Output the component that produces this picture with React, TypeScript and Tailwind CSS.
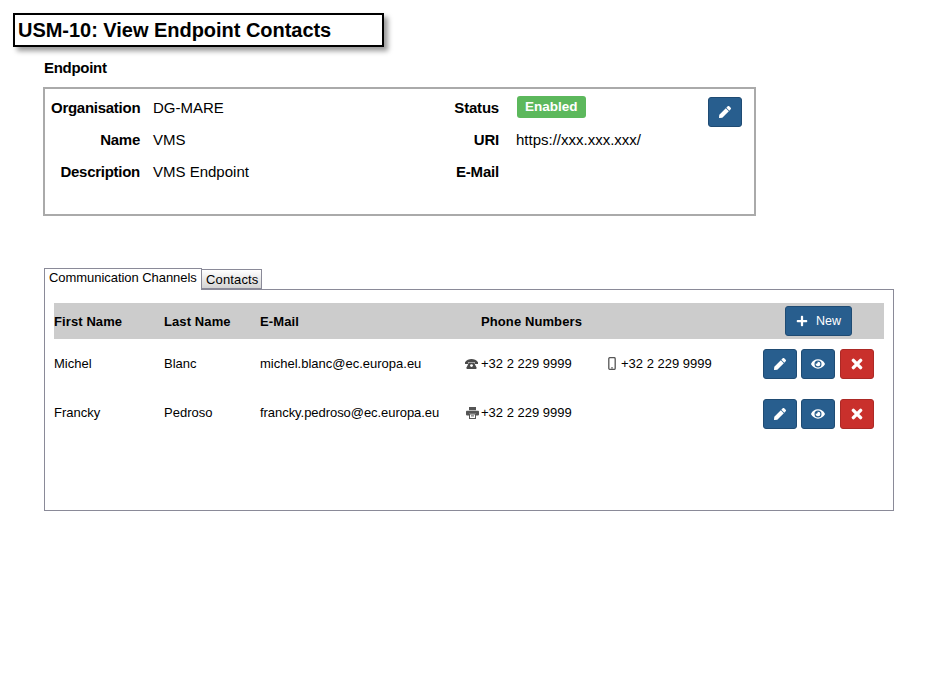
import { FaEye, FaPen, FaPlus } from "react-icons/fa";

function DeskPhone() {
  return (
    <svg width="13" height="10" viewBox="0 0 13 10" fill="#4a4a4a">
      <path d="M0 3.2C1.5.8 4 0 6.5 0S11.5.8 13 3.2V5H9.6V3H3.4v2H0z" />
      <path d="M4 3.6h5l2.4 4.6V10H1.6V8.2z" />
      <circle cx="6.5" cy="6.6" r="1.4" fill="#fff" />
    </svg>
  );
}

function Mobile() {
  return (
    <svg width="8" height="13" viewBox="0 0 8 13" fill="none">
      <rect x="0.8" y="0.6" width="6.4" height="11.8" rx="1.2" stroke="#555" strokeWidth="1.3" />
      <rect x="3" y="10.4" width="2" height="1" fill="#555" />
    </svg>
  );
}

function Printer() {
  return (
    <svg width="13" height="12" viewBox="0 0 13 12" fill="#555">
      <rect x="3" y="0" width="7" height="3.2" />
      <rect x="0" y="3.8" width="13" height="4.6" rx="0.8" />
      <rect x="3" y="6.6" width="7" height="5.4" fill="#fff" />
      <path d="M3 6.6h7V12H3zM4 7.6v3.4h5V7.6z" />
      <rect x="5" y="8.4" width="3" height="1" />
    </svg>
  );
}

// thick rounded cross, heavier than the icon pack's one
function Cross() {
  return (
    <svg width="12" height="12" viewBox="0 0 12 12" fill="none" stroke="currentColor" strokeWidth="3.4" strokeLinecap="round">
      <path d="M2.4 2.4l7.2 7.2M9.6 2.4l-7.2 7.2" />
    </svg>
  );
}

function IconButton({ color, children }: { color: "blue" | "red"; children: React.ReactNode }) {
  const cls =
    color === "blue"
      ? "bg-[#285e8e] border-[#1f4b73]"
      : "bg-[#c9302c] border-[#ac2925]";
  return (
    <button className={`flex h-[30px] w-[34px] items-center justify-center rounded-[3px] border text-white ${cls}`}>
      {children}
    </button>
  );
}

function Actions() {
  return (
    <div className="flex">
      <IconButton color="blue">
        <FaPen className="h-[12px] w-[12px]" />
      </IconButton>
      <div className="ml-[4px]">
        <IconButton color="blue">
          <FaEye className="h-[14px] w-[14px]" />
        </IconButton>
      </div>
      <div className="ml-[5px]">
        <IconButton color="red">
          <Cross />
        </IconButton>
      </div>
    </div>
  );
}

function Field({ label, children }: { label: string; children?: React.ReactNode }) {
  return (
    <div className="flex h-[32px] items-center">
      <div className="w-[89px] whitespace-nowrap text-right text-[15px] font-bold tracking-[-0.27px] text-black">{label}</div>
      <div className="ml-[13px] pt-px text-[15px] text-black">{children}</div>
    </div>
  );
}

function RightField({ label, children }: { label: string; children?: React.ReactNode }) {
  return (
    <div className="flex h-[32px] items-center">
      <div className="w-[55px] whitespace-nowrap text-right text-[15px] font-bold tracking-[-0.2px] text-black">{label}</div>
      <div className="ml-[17px] pt-px text-[15px] text-black">{children}</div>
    </div>
  );
}

export default function App() {
  return (
    <div className="min-h-screen bg-white font-['Liberation_Sans',Arial,sans-serif] text-black">
      <div className="pl-[13px] pt-[13px]">
        <div className="flex h-[34px] w-[371px] items-center border-2 border-black bg-white pl-[3px] text-[20px] font-bold tracking-[-0.03px] shadow-[4px_4px_5px_rgba(0,0,0,0.4)]">
          USM-10: View Endpoint Contacts
        </div>
      </div>

      <div className="pl-[44px] pt-[12px] text-[15px] font-bold leading-[17px] tracking-[-0.3px]">Endpoint</div>

      <div className="ml-[43px] mt-[11px] flex h-[129px] w-[713px] border-2 border-[#aaaaaa] pl-[6px] pt-[3px]">
        <div className="w-[393px]">
          <Field label="Organisation">DG-MARE</Field>
          <Field label="Name">VMS</Field>
          <Field label="Description">VMS Endpoint</Field>
        </div>
        <div className="w-[264px]">
          <RightField label="Status">
            <span className="-mt-[3px] ml-px block rounded-[3px] bg-[#5cb85c] px-[8px] py-[3px] text-[13.5px] font-bold leading-[16px] text-white">
              Enabled
            </span>
          </RightField>
          <RightField label="URI">https://xxx.xxx.xxx/</RightField>
          <RightField label="E-Mail" />
        </div>
        <div className="pt-[5px]">
          <IconButton color="blue">
            <FaPen className="h-[12px] w-[12px]" />
          </IconButton>
        </div>
      </div>

      <div className="ml-[44px] mt-[52px] flex h-[21px] items-end">
        <div className="relative z-10 -mb-px flex h-[22px] w-[158px] items-center border border-b-0 border-[#8a8a98] bg-white pb-[4px] pl-[4px] text-[13px] tracking-[-0.05px]">
          Communication Channels
        </div>
        <div className="flex h-[20px] w-[60px] items-center border border-[#8a8a98] border-l-0 bg-gradient-to-b from-white to-[#d4d4d4] pl-[4px] pt-px text-[13px] tracking-[0.15px]">
          Contacts
        </div>
      </div>

      <div className="ml-[44px] h-[222px] w-[850px] border border-[#8a8a98] px-[9px] pt-[13px] text-[13px] text-black">
        <div className="flex h-[36px] items-center bg-[#cccccc] font-bold tracking-[0.1px]">
          <div className="w-[110px] pt-px">First Name</div>
          <div className="w-[96px] pt-px">Last Name</div>
          <div className="w-[221px] pt-px">E-Mail</div>
          <div className="w-[304px] pt-px">Phone Numbers</div>
          <button className="flex h-[30px] w-[67px] items-center justify-center gap-[8px] rounded-[3px] border border-[#1f4b73] bg-[#285e8e] text-[12.5px] font-normal tracking-normal text-white">
            <FaPlus className="h-[12px] w-[12px]" />
            New
          </button>
        </div>

        <div className="flex h-[49px] items-center">
          <div className="w-[110px]">Michel</div>
          <div className="w-[96px]">Blanc</div>
          <div className="w-[205px]">michel.blanc@ec.europa.eu</div>
          <div className="flex w-[143px] items-center">
            <div className="flex w-[16px] justify-start"><DeskPhone /></div>
            +32 2 229 9999
          </div>
          <div className="flex w-[155px] items-center">
            <div className="flex w-[13px] justify-start"><Mobile /></div>
            +32 2 229 9999
          </div>
          <Actions />
        </div>

        <div className="flex h-[49px] items-center">
          <div className="w-[110px]">Francky</div>
          <div className="w-[96px]">Pedroso</div>
          <div className="w-[205px] tracking-[-0.05px]">francky.pedroso@ec.europa.eu</div>
          <div className="flex w-[298px] items-center">
            <div className="flex w-[16px] justify-start pl-px"><Printer /></div>
            +32 2 229 9999
          </div>
          <div className="pt-[2px]">
            <Actions />
          </div>
        </div>
      </div>
    </div>
  );
}
